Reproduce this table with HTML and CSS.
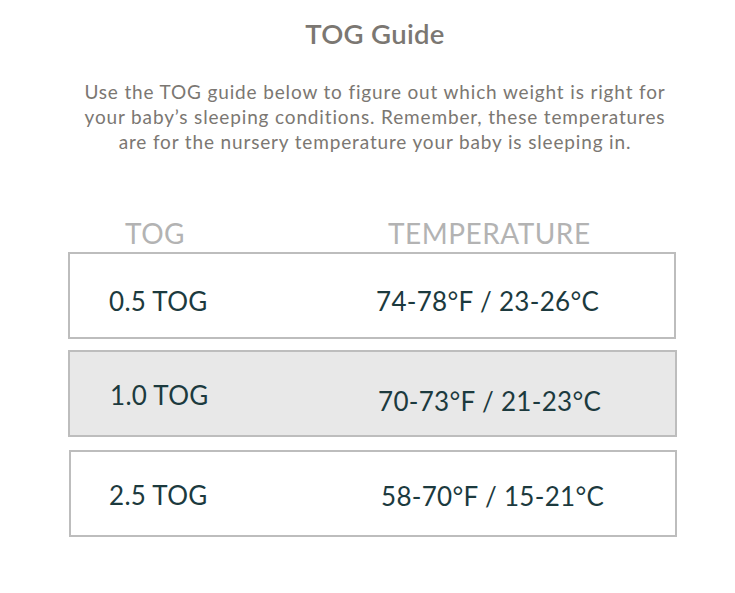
FILE: index.html
```html
<!DOCTYPE html>
<html>
<head>
<meta charset="utf-8">
<link rel="stylesheet" href="styles.css">
</head>
<body>
<div class="page">
  <h1 class="title">TOG Guide</h1>
  <p class="intro">Use the TOG guide below to figure out which weight is right for<br>your baby’s sleeping conditions. Remember, these temperatures<br>are for the nursery temperature your baby is sleeping in.</p>
  <div class="table">
    <div class="head">
      <span class="h-tog">TOG</span>
      <span class="h-temp">TEMPERATURE</span>
    </div>
    <div class="row row1">
      <span class="c-tog">0.5 TOG</span>
      <span class="c-temp">74-78°F / 23-26°C</span>
    </div>
    <div class="row row2 shaded">
      <span class="c-tog">1.0 TOG</span>
      <span class="c-temp">70-73°F / 21-23°C</span>
    </div>
    <div class="row row3">
      <span class="c-tog">2.5 TOG</span>
      <span class="c-temp">58-70°F / 15-21°C</span>
    </div>
  </div>
</div>
</body>
</html>
```
FILE: styles.css
```css
html, body {
  margin: 0;
  padding: 0;
  background: #ffffff;
  overflow: hidden;
}
.page {
  width: 750px;
  font-family: "Lato", "Noto Sans", sans-serif;
}
.title {
  margin: 0;
  padding-top: 17px;
  text-align: center;
  font-size: 27.5px;
  font-weight: 600;
  color: #7b7772;
  line-height: 34px;
  letter-spacing: 0.3px;
}
.intro {
  margin: 28px auto 0;
  width: 640px;
  text-align: center;
  font-size: 19px;
  line-height: 25px;
  color: #7b7772;
  letter-spacing: 0.85px;
  white-space: nowrap;
}
.table {
  margin-top: 64px;
  margin-left: 68px;
  width: 608px;
  display: flex;
  flex-direction: column;
}
.head {
  display: flex;
  height: 34px;
  line-height: 30px;
  align-items: flex-start;
  font-size: 28px;
  color: #b3b3b3;
  letter-spacing: 0.5px;
}
.h-tog {
  box-sizing: border-box;
  padding-left: 57px;
  width: 320px;
}
.row {
  box-sizing: border-box;
  display: flex;
  align-items: center;
  height: 87px;
  border: 2px solid #bdbdbd;
  font-size: 26px;
  color: #1c3a3e;
  letter-spacing: 0.3px;
}
.row1 { margin-top: 0; }
.row2 { margin-top: 11px; width: 609px; }
.row3 { margin-top: 13px; margin-left: 1px; width: 608px; }
.shaded {
  background: #e8e8e8;
}
.c-tog, .c-temp {
  position: relative;
}
.c-tog {
  box-sizing: border-box;
  padding-left: 39px;
  width: 306px;
}
.row1 .c-tog, .row1 .c-temp { top: 5px; }
.row2 .c-tog { padding-left: 40px; width: 308px; top: 1px; }
.row2 .c-temp { top: 7px; }
.row3 .c-tog { padding-left: 38px; width: 310px; top: 1px; }
.row3 .c-temp { top: 2px; }
```
